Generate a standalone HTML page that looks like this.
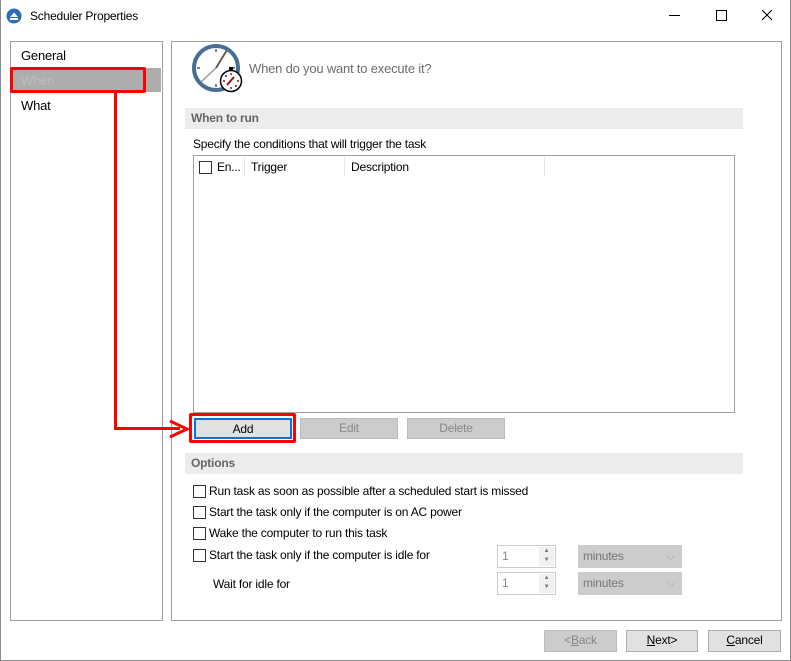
<!DOCTYPE html>
<html><head><meta charset="utf-8"><style>
*{box-sizing:border-box;margin:0;padding:0}
body{width:791px;height:661px;background:#fff;font-family:"Liberation Sans",Arial,sans-serif;font-size:12px;color:#000;position:relative;overflow:hidden;letter-spacing:-0.2px}
.a{position:absolute}
.bar{position:absolute;background:#ececec;font-weight:bold;color:#666;padding-left:6px;line-height:21px}
.cb{position:absolute;width:13px;height:13px;border:1px solid #333;background:#fff}
.btn{position:absolute;height:21px;text-align:center;line-height:19px;border:1px solid #bbb;background:#ccc;color:#888}
.spin{position:absolute;width:59px;height:23px;border:1px solid #ccc;background:#fff;color:#888;padding-left:4px;line-height:21px}
.spin .ar{position:absolute;right:1px;top:1px;width:15px;height:19px;background:#f0f0f0;font-size:6px;color:#777;line-height:9px;text-align:center}
.combo{position:absolute;width:104px;height:23px;background:#ccc;border:1px solid #ccc;color:#777;padding-left:4px;line-height:21px}
</style></head><body>
<div class="a" style="left:0;top:0;width:791px;height:661px;border:1px solid #8a8a8a;border-top:none"></div>
<svg class="a" style="left:6px;top:8px" width="16" height="16"><circle cx="8" cy="8" r="7.5" fill="#2a6db5"/><path d="M4 9 L8 4.5 L12 9Z" fill="#fff"/><rect x="4" y="10" width="8" height="2" fill="#fff"/></svg>
<div class="a" style="left:30px;top:9px;font-size:12px">Scheduler Properties</div>
<div class="a" style="left:669px;top:15px;width:11px;height:1px;background:#000"></div>
<div class="a" style="left:716px;top:10px;width:11px;height:11px;border:1px solid #000"></div>
<svg class="a" style="left:761px;top:9px" width="12" height="12"><path d="M1 1L11 11M11 1L1 11" stroke="#000" stroke-width="1"/></svg>
<div class="a" style="left:10px;top:41px;width:153px;height:580px;border:1px solid #a0a0a0"></div>
<div class="a" style="left:21px;top:48px;font-size:13px">General</div>
<div class="a" style="left:11px;top:68px;width:150px;height:24px;background:#adadad"></div>
<div class="a" style="left:21px;top:73px;font-size:13px;color:#bcbcbc">When</div>
<div class="a" style="left:21px;top:98px;font-size:13px">What</div>
<div class="a" style="left:171px;top:41px;width:611px;height:580px;border:1px solid #a0a0a0"></div>
<svg class="a" style="left:192px;top:44px" width="52" height="50">
<circle cx="24" cy="24" r="22" fill="#fff" stroke="#4a6f95" stroke-width="4"/>
<path d="M24 5v3M24 40v3M5 24h3M40 24h3" stroke="#555" stroke-width="1.5"/>
<path d="M24 24L35 6" stroke="#6b5a50" stroke-width="2"/><path d="M24 24L9 38" stroke="#999" stroke-width="1.5"/>
<circle cx="39" cy="37" r="10.5" fill="#fff" stroke="#000" stroke-width="1.5"/><rect x="37" y="23" width="4" height="3" fill="#000"/>
<path d="M35 41L42 33" stroke="#8b1a1a" stroke-width="2"/>
<g fill="#8b1a1a"><circle cx="39" cy="30" r="1"/><circle cx="46" cy="37" r="1"/><circle cx="39" cy="44" r="1"/><circle cx="32" cy="37" r="1"/><circle cx="44" cy="42" r="1"/><circle cx="34" cy="32" r="1"/></g>
</svg>
<div class="a" style="left:249px;top:61px;font-size:13px;color:#6d6d6d">When do you want to execute it?</div>
<div class="bar" style="left:185px;top:108px;width:558px;height:21px">When to run</div>
<div class="a" style="left:193px;top:137px">Specify the conditions that will trigger the task</div>
<div class="a" style="left:193px;top:155px;width:542px;height:258px;border:1px solid #a0a0a0"></div>
<div class="cb" style="left:199px;top:161px"></div>
<div class="a" style="left:217px;top:160px">En...</div>
<div class="a" style="left:244px;top:157px;width:1px;height:19px;background:#e5e5e5"></div>
<div class="a" style="left:251px;top:160px">Trigger</div>
<div class="a" style="left:344px;top:157px;width:1px;height:19px;background:#e5e5e5"></div>
<div class="a" style="left:351px;top:160px">Description</div>
<div class="a" style="left:544px;top:157px;width:1px;height:19px;background:#e5e5e5"></div>
<div class="btn" style="left:194px;top:418px;width:98px;border:2px solid #0a74d4;background:#e1e1e1;color:#000">Add</div>
<div class="btn" style="left:300px;top:418px;width:98px">Edit</div>
<div class="btn" style="left:407px;top:418px;width:98px">Delete</div>
<div class="bar" style="left:185px;top:453px;width:558px;height:21px">Options</div>
<div class="cb" style="left:193px;top:485px"></div><div class="a" style="left:209px;top:484px">Run task as soon as possible after a scheduled start is missed</div>
<div class="cb" style="left:193px;top:506px"></div><div class="a" style="left:209px;top:505px">Start the task only if the computer is on AC power</div>
<div class="cb" style="left:193px;top:527px"></div><div class="a" style="left:209px;top:526px">Wake the computer to run this task</div>
<div class="cb" style="left:193px;top:549px"></div><div class="a" style="left:209px;top:548px">Start the task only if the computer is idle for</div>
<div class="a" style="left:213px;top:577px">Wait for idle for</div>
<div class="spin" style="left:497px;top:545px">1<div class="ar">▲<br>▼</div></div>
<div class="spin" style="left:497px;top:572px">1<div class="ar">▲<br>▼</div></div>
<div class="combo" style="left:578px;top:545px">minutes<span style="position:absolute;right:6px;color:#aaa">⌵</span></div>
<div class="combo" style="left:578px;top:572px">minutes<span style="position:absolute;right:6px;color:#aaa">⌵</span></div>
<div class="btn" style="left:544px;top:630px;width:73px;height:22px">&lt;<u>B</u>ack</div>
<div class="btn" style="left:626px;top:630px;width:72px;height:22px;background:#e1e1e1;border-color:#adadad;color:#000"><u>N</u>ext&gt;</div>
<div class="btn" style="left:708px;top:630px;width:73px;height:22px;background:#e1e1e1;border-color:#adadad;color:#000"><u>C</u>ancel</div>
<div class="a" style="left:10px;top:67px;width:136px;height:26px;border:3px solid #f00;border-radius:2px"></div>
<div class="a" style="left:189px;top:413px;width:107px;height:30px;border:3px solid #f00;border-radius:2px"></div>
<div class="a" style="left:114px;top:92px;width:3px;height:338px;background:#f00"></div>
<div class="a" style="left:114px;top:427px;width:66px;height:3px;background:#f00"></div>
<svg class="a" style="left:168px;top:416px" width="22" height="26"><path d="M2 5L19 13L2 21" fill="none" stroke="#f00" stroke-width="3"/></svg>
</body></html>
